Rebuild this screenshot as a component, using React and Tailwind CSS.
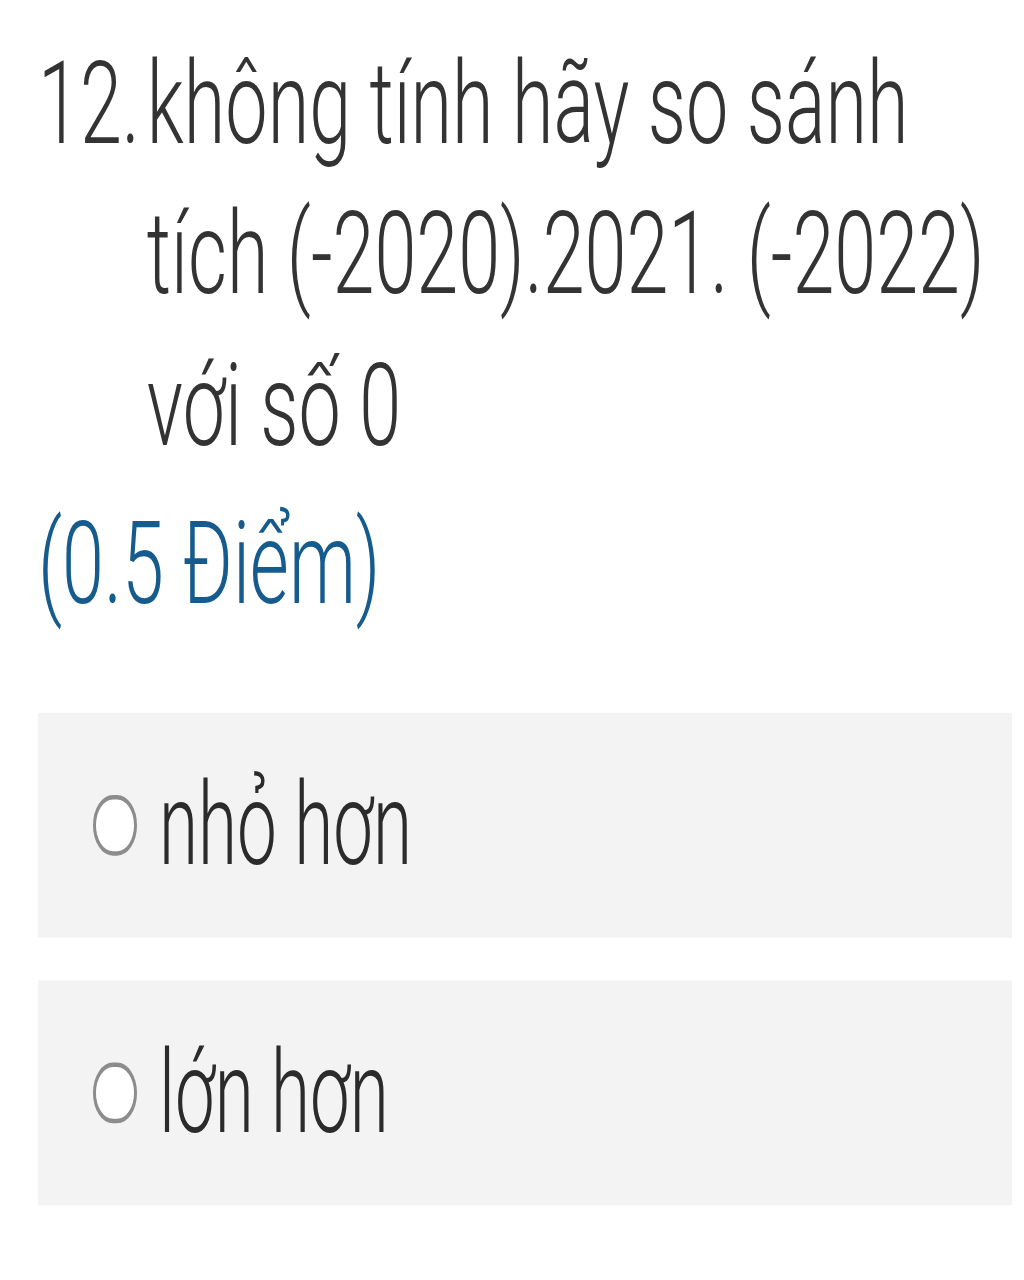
export default function App() {
  const font = { fontFamily: "Roboto, 'Noto Sans', sans-serif" };
  return (
    <div className="w-[1024px] h-[1280px] bg-white overflow-hidden">
      <div className="origin-top scale-y-[1.52] pt-[19px] pl-[38px] pr-[12px]" style={font}>
        <div className="flex gap-[7px] text-[75.5px] font-[350] leading-[99.3px] text-[#333333]">
          <span className="shrink-0">12.</span>
          <div className="flex flex-col">
            <span>không tính hãy so sánh</span>
            <span>tích (-2020).2021. (-2022)</span>
            <span>với số 0</span>
          </div>
        </div>
        <div className="mt-[5px] text-[75.5px] font-[350] leading-[99px] text-[#165b8d]">(0.5 Điểm)</div>
        <div className="mt-[48px] flex flex-col gap-[28px]">
          {["nhỏ hơn", "lớn hơn"].map((t) => (
            <div key={t} className="h-[148px] bg-[#f3f3f3] flex items-center pl-[55px] gap-[22px]">
              <span className="w-[44px] h-[40px] rounded-full border-[3px] border-[#8c8c8c] bg-white shrink-0" />
              <span className="text-[71px] font-light text-[#2b2b2b] inline-block scale-y-[1.07]">{t}</span>
            </div>
          ))}
        </div>
      </div>
    </div>
  );
}
